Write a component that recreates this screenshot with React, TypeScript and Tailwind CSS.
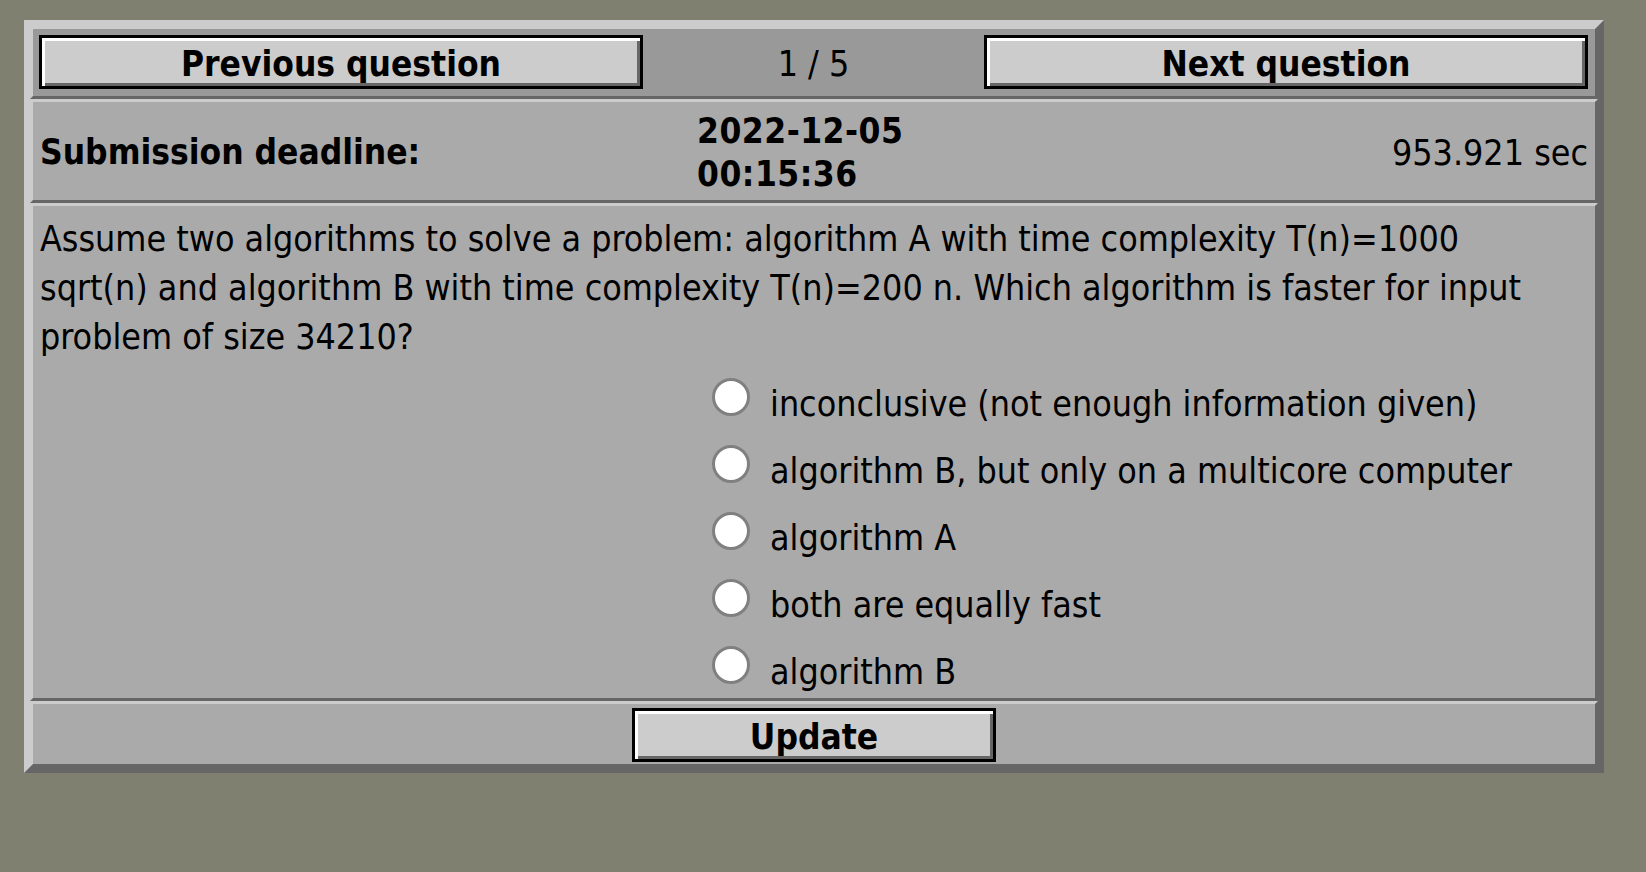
import React from "react";

const options = [
  "inconclusive (not enough information given)",
  "algorithm B, but only on a multicore computer",
  "algorithm A",
  "both are equally fast",
  "algorithm B",
];

const cell =
  "border-[3px] border-t-[#cccccc] border-l-[#cccccc] border-r-[#666666] border-b-[#666666]";

const btn =
  "h-[54px] border-[3px] border-black bg-[#cccccc] pt-[4px] font-bold text-[35px] leading-none text-black shadow-[inset_3px_3px_0_#ffffff,inset_-3px_-3px_0_#666666]";

export default function App() {
  return (
    <div className="min-h-[872px] bg-[#808070] pt-[20px] pl-[24px] font-['DejaVu_Sans_Condensed','DejaVu_Sans',sans-serif] text-black">
      <div className="w-[1580px] border-[6px] border-t-[#cccccc] border-l-[#cccccc] border-r-[#666666] border-b-[#666666]">
        {/* Navigation */}
        <div className={`${cell} flex items-start bg-[#999999] pt-[6px] pb-[7px] pl-[6px] pr-[7px]`}>
          <button className={`${btn} w-[604px]`}>Previous question</button>
          <div className="flex h-[54px] flex-1 items-center justify-center pt-[4px] text-[35.5px]">1 / 5</div>
          <button className={`${btn} w-[604px]`}>Next question</button>
        </div>

        {/* Deadline */}
        <div className={`${cell} grid h-[104px] grid-cols-[657px_1fr_auto] items-center bg-[#aaaaaa] px-[7px] pt-[3px] text-[35.5px]`}>
          <div className="text-[35px] font-bold">Submission deadline:</div>
          <div className="text-[35px] font-bold leading-[43px] tracking-[0.5px]">
            2022-12-05
            <br />
            00:15:36
          </div>
          <div>953.921 sec</div>
        </div>

        {/* Question */}
        <div className={`${cell} bg-[#aaaaaa] px-[7px] pt-[8px] pb-[6px] text-[35.5px]`}>
          <p className="leading-[49px]">
            Assume two algorithms to solve a problem: algorithm A with time complexity T(n)=1000
            <br />
            sqrt(n) and algorithm B with time complexity T(n)=200 n. Which algorithm is faster for input
            <br />
            problem of size 34210?
          </p>
          <div className="mt-[17px] grid grid-cols-[657px_1fr]">
            <div />
            <div className="flex flex-col gap-[21px]">
              {options.map((o) => (
                <label key={o} className="flex items-start">
                  <span className="ml-[15px] h-[38px] w-[38px] shrink-0 rounded-full border-[3px] border-[#808080] bg-white" />
                  <span className="ml-[20px] mt-[5px] leading-[41px]">{o}</span>
                </label>
              ))}
            </div>
          </div>
        </div>

        {/* Submit */}
        <div className={`${cell} flex h-[66px] justify-center bg-[#aaaaaa] pt-[4px]`}>
          <button className={`${btn} h-[52px] w-[364px]`}>Update</button>
        </div>
      </div>
    </div>
  );
}
